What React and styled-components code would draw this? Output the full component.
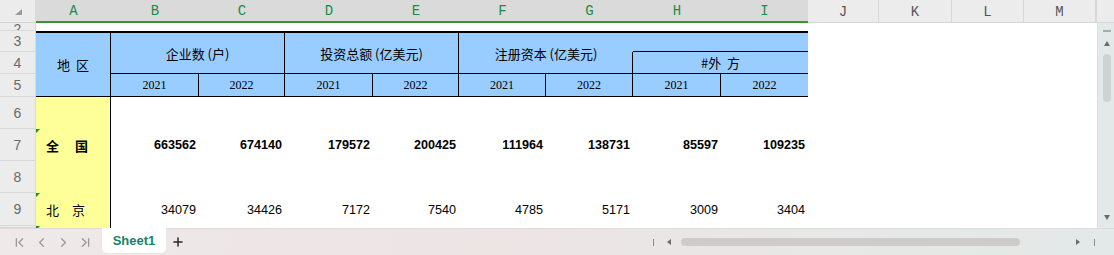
import styled, { createGlobalStyle } from "styled-components";
import { ChevronFirst, ChevronLeft, ChevronRight, ChevronLast, Plus } from "lucide-react";

const GlobalStyle = createGlobalStyle`
  html, body { margin: 0; padding: 0; background: #fff; }
  * { box-sizing: border-box; }
`;

const CJK = `"Noto Sans CJK SC", "Noto Sans", sans-serif`;

const columns = [
  { key: "A", sel: true },
  { key: "B", sel: true },
  { key: "C", sel: true },
  { key: "D", sel: true },
  { key: "E", sel: true },
  { key: "F", sel: true },
  { key: "G", sel: true },
  { key: "H", sel: true },
  { key: "I", sel: true },
  { key: "J" },
  { key: "K" },
  { key: "L" },
  { key: "M" },
];

const rows = [
  { n: 2, top: true },
  { n: 3 },
  { n: 4 },
  { n: 5 },
  { n: 6 },
  { n: 7 },
  { n: 8 },
  { n: 9 },
  { n: 10, hide: true },
];

const years = ["2021", "2022", "2021", "2022", "2021", "2022", "2021", "2022"];

const data = [
  { row: 7, name: "全\u3000 国", bold: true, flag: true, values: [663562, 674140, 179572, 200425, 111964, 138731, 85597, 109235] },
  { row: 9, name: "北\u3000京", flag: true, values: [34079, 34426, 7172, 7540, 4785, 5171, 3009, 3404] },
];

export default function App() {
  return (
    <Page>
      <GlobalStyle />
      <Main>
        <Sheet>
          <Corner>
            <CornerMark />
          </Corner>
          {columns.map((c, i) => (
            <ColHead key={c.key} $col={i + 2} $sel={c.sel}>
              {c.key}
            </ColHead>
          ))}
          <ColHead $col={15} />

          {rows.map((r, i) => (
            <RowHead key={r.n} $row={i + 2} $top={r.top}>
              {r.hide ? "" : r.n}
            </RowHead>
          ))}

          <HeadCell $col={2} $row={3} $rowSpan={3}>
            地&nbsp;&nbsp;区
          </HeadCell>
          <HeadCell $col={3} $row={3} $colSpan={2} $rowSpan={2}>
            企业数 (户)
          </HeadCell>
          <HeadCell $col={5} $row={3} $colSpan={2} $rowSpan={2}>
            投资总额 (亿美元)
          </HeadCell>
          <HeadCell $col={7} $row={3} $colSpan={2} $rowSpan={2} $noRight>
            注册资本 (亿美元)
          </HeadCell>
          <HeadCell $col={9} $row={3} $colSpan={2} $noRight />
          <HeadCell $col={9} $row={4} $colSpan={2} $noTop $noRight $left>
            #外&nbsp;&nbsp;方
          </HeadCell>
          {years.map((y, i) => (
            <YearCell key={i} $col={i + 3} $noRight={i === 7}>
              {y}
            </YearCell>
          ))}

          {[6, 8, 10].map((r) => (
            <RegionCell key={r} $row={r} $flag={r === 10} />
          ))}
          {data.map((d) => [
            <RegionCell key={"n" + d.row} $row={d.row} $bold={d.bold} $flag={d.flag}>
              {d.name}
            </RegionCell>,
            ...d.values.map((v, i) => (
              <NumCell key={d.row + "-" + i} $row={d.row} $col={i + 3} $bold={d.bold}>
                {v}
              </NumCell>
            )),
          ])}
        </Sheet>
        <RightRail>
          <RailHead />
          <VScroll>
            <Dash />
            <UpArrow />
            <VThumb />
            <Spacer />
            <DownArrow />
          </VScroll>
        </RightRail>
      </Main>
      <TabBar>
        <Nav>
          <ChevronFirst size={15} strokeWidth={2.2} />
          <ChevronLeft size={15} strokeWidth={2.2} />
          <ChevronRight size={15} strokeWidth={2.2} />
          <ChevronLast size={15} strokeWidth={2.2} />
        </Nav>
        <SheetTab>Sheet1</SheetTab>
        <AddSheet>
          <Plus size={14} strokeWidth={2.6} />
        </AddSheet>
        <HScroll>
          <Tick />
          <LeftArrow />
          <HTrack>
            <HThumb />
          </HTrack>
          <RightArrow />
          <Tick />
        </HScroll>
      </TabBar>
    </Page>
  );
}

const Page = styled.div`
  width: 1114px;
  height: 255px;
  display: flex;
  flex-direction: column;
  overflow: hidden;
  background: #fff;
`;

const Main = styled.div`
  height: 228px;
  display: flex;
`;

const Sheet = styled.div`
  width: 1097px;
  display: grid;
  grid-template-columns: 36px 75px 88px 86px 88px 86px 87px 87px 88px 87px 71px 73px 72px 72px 1fr;
  grid-template-rows: 23px 8px 21px 22px 23px 32px 32px 32px 33px 1fr;
  overflow: hidden;
`;

const Corner = styled.div`
  grid-column: 1;
  grid-row: 1;
  background: #ececec;
  border-right: 1px solid #dadada;
  border-bottom: 1px solid #d6d6d6;
  position: relative;
`;

const CornerMark = styled.div`
  position: absolute;
  left: 15px;
  top: 9px;
  width: 0;
  height: 0;
  border-left: 7px solid transparent;
  border-bottom: 6px solid #9a9a9a;
`;

const ColHead = styled.div`
  grid-column: ${(p) => p.$col};
  grid-row: 1;
  display: flex;
  align-items: center;
  justify-content: center;
  padding-top: 1px;
  font-family: "Liberation Mono", "DejaVu Sans Mono", monospace;
  font-size: 14px;
  background: ${(p) => (p.$sel ? "#dadada" : "#ececec")};
  color: ${(p) => (p.$sel ? "#1e8a48" : "#555")};
  border-right: ${(p) => (p.$sel ? "none" : "1px solid #d8d8d8")};
  border-bottom: ${(p) => (p.$sel ? "2px solid #3e9236" : "1px solid #d6d6d6")};
`;

const RowHead = styled.div`
  grid-column: 1;
  grid-row: ${(p) => p.$row};
  display: flex;
  align-items: ${(p) => (p.$top ? "flex-start" : "center")};
  justify-content: center;
  overflow: hidden;
  line-height: ${(p) => (p.$top ? "8px" : "normal")};
  padding-top: ${(p) => (p.$top ? "2px" : "0")};
  font-family: "Liberation Sans", sans-serif;
  font-size: 14px;
  color: #6a6a6a;
  background: #ececec;
  border-right: 1px solid #dadada;
  border-bottom: 1px solid #d8d8d8;
`;

const HeadCell = styled.div`
  grid-column: ${(p) => p.$col} / span ${(p) => p.$colSpan || 1};
  grid-row: ${(p) => p.$row} / span ${(p) => p.$rowSpan || 1};
  display: flex;
  align-items: center;
  justify-content: center;
  white-space: nowrap;
  font-family: ${CJK};
  font-size: 13px;
  color: #000;
  background: #99ccff;
  border-top: ${(p) => (p.$noTop ? "none" : "2px solid #000")};
  border-right: ${(p) => (p.$noRight ? "none" : "1px solid #000")};
  border-bottom: 1px solid #000;
  border-left: ${(p) => (p.$left ? "1px solid #000" : "none")};
  margin-left: ${(p) => (p.$left ? "-1px" : "0")};
`;

const YearCell = styled.div`
  grid-column: ${(p) => p.$col};
  grid-row: 5;
  display: flex;
  align-items: center;
  justify-content: center;
  padding-top: 1px;
  font-family: "Liberation Serif", serif;
  font-size: 12px;
  color: #000;
  background: #99ccff;
  border-right: ${(p) => (p.$noRight ? "none" : "1px solid #000")};
  border-bottom: 1px solid #000;
`;

const RegionCell = styled.div`
  grid-column: 2;
  grid-row: ${(p) => p.$row};
  display: flex;
  align-items: center;
  padding-left: 10px;
  white-space: pre;
  font-family: ${CJK};
  font-size: 13px;
  font-weight: ${(p) => (p.$bold ? 700 : 400)};
  color: #000;
  background: #ffff99;
  border-right: 1px solid #000;
  position: relative;

  &::before {
    content: "";
    display: ${(p) => (p.$flag ? "block" : "none")};
    position: absolute;
    left: 0;
    top: 0;
    border-top: 4px solid #1a8a1a;
    border-right: 4px solid transparent;
  }
`;

const NumCell = styled.div`
  grid-column: ${(p) => p.$col};
  grid-row: ${(p) => p.$row};
  display: flex;
  align-items: center;
  justify-content: flex-end;
  padding-right: 3px;
  font-family: "Liberation Sans", Arial, sans-serif;
  font-size: 12.6px;
  font-weight: ${(p) => (p.$bold ? 700 : 400)};
  color: #000;
`;

const RightRail = styled.div`
  width: 17px;
  display: flex;
  flex-direction: column;
`;

const RailHead = styled.div`
  height: 23px;
  background: #ececec;
  border-bottom: 1px solid #d6d6d6;
`;

const VScroll = styled.div`
  flex: 1;
  display: flex;
  flex-direction: column;
  align-items: center;
  padding: 7px 0 7px 1px;
  background: #e3e8e8;
  border-left: 1px solid #d9dede;
`;

const Dash = styled.div`
  width: 8px;
  height: 2px;
  background: #a8acac;
`;

const UpArrow = styled.div`
  margin-top: 9px;
  border-left: 3.5px solid transparent;
  border-right: 3.5px solid transparent;
  border-bottom: 5px solid #6c6c6c;
`;

const VThumb = styled.div`
  margin-top: 8px;
  width: 8px;
  height: 48px;
  border-radius: 4px;
  background: #cdd2d2;
`;

const Spacer = styled.div`
  flex: 1;
`;

const DownArrow = styled.div`
  margin-bottom: 1px;
  border-left: 3.5px solid transparent;
  border-right: 3.5px solid transparent;
  border-top: 5px solid #6c6c6c;
`;

const TabBar = styled.div`
  flex: 1;
  display: flex;
  align-items: stretch;
  background: linear-gradient(90deg, #efe9e9 0%, #ede4e4 45%, #e7e8e7 75%, #e2e9e8 100%);
  border-top: 1px solid #dcdcdc;
`;

const Nav = styled.div`
  display: flex;
  align-items: center;
  gap: 7px;
  padding-left: 12px;
  color: #9c9c9c;
`;

const SheetTab = styled.div`
  margin: -1px 0 2px 9px;
  width: 64px;
  display: flex;
  align-items: center;
  justify-content: center;
  padding-bottom: 1px;
  background: #fff;
  border-radius: 0 0 5px 5px;
  font-family: "Liberation Sans", Arial, sans-serif;
  font-size: 13px;
  font-weight: 700;
  color: #17836a;
`;

const AddSheet = styled.div`
  display: flex;
  align-items: center;
  margin-left: 5px;
  color: #2b2b2b;
`;

const HScroll = styled.div`
  margin-left: auto;
  padding-right: 19px;
  display: flex;
  align-items: center;
`;

const Tick = styled.div`
  width: 1px;
  height: 7px;
  background: #8c8c8c;
  & + & {
    margin-left: 14px;
  }
`;

const LeftArrow = styled.div`
  margin-left: 13px;
  border-top: 3px solid transparent;
  border-bottom: 3px solid transparent;
  border-right: 4px solid #6c6c6c;
`;

const RightArrow = styled.div`
  margin-left: 6px;
  margin-right: 14px;
  border-top: 3px solid transparent;
  border-bottom: 3px solid transparent;
  border-left: 4px solid #6c6c6c;
`;

const HTrack = styled.div`
  margin-left: 10px;
  width: 389px;
  display: flex;
`;

const HThumb = styled.div`
  width: 339px;
  height: 8px;
  border-radius: 4px;
  background: #cfcbcb;
`;
